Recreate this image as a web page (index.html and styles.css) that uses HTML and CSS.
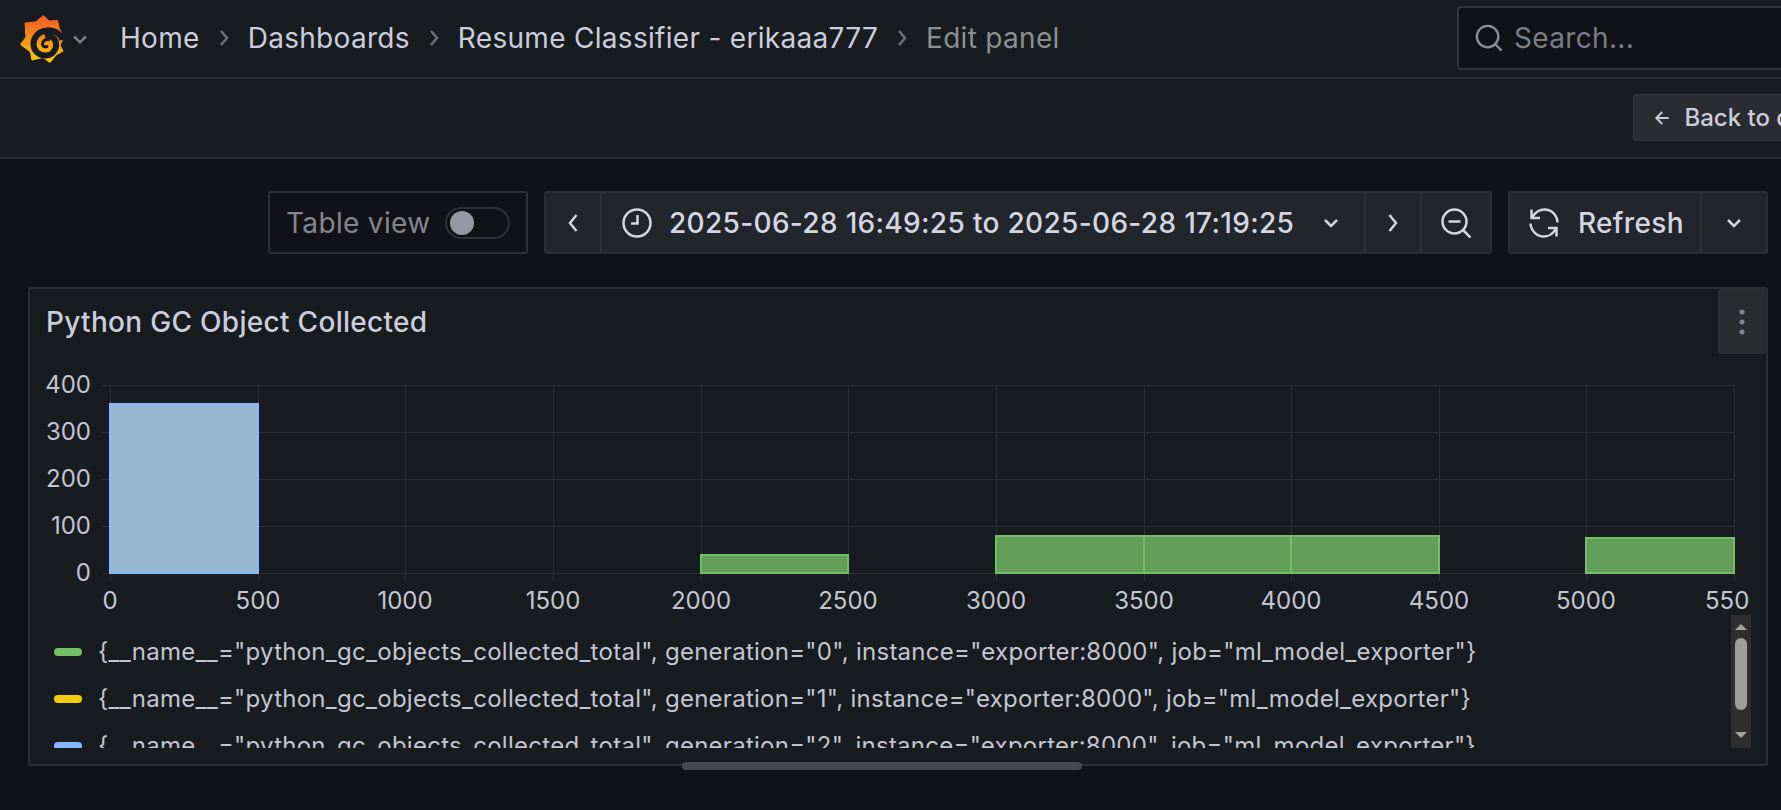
FILE: index.html
```html
<!DOCTYPE html>
<html lang="en">
<head>
<meta charset="utf-8">
<title>Edit panel - Grafana</title>
<link rel="stylesheet" href="styles.css">
</head>
<body>
<header class="nav">
  <svg class="logo" viewBox="18 12 48 52" aria-label="Grafana">
    <defs>
      <linearGradient id="sun" x1="0" y1="0" x2="0" y2="1">
        <stop offset="0" stop-color="#f05a28"/>
        <stop offset="1" stop-color="#fbca0a"/>
      </linearGradient>
    </defs>
    <path fill="url(#sun)" stroke="url(#sun)" stroke-width="1" stroke-linejoin="round" d="M43.5 14.5 L49 20 L57.5 19.5 L59 27 L62.5 34 L63 38 L60 44 L63 50 L56 54 L50 61.5 L43 56.5 L32 59 L30.5 51 L20.5 43.5 L26 36 L25 22 L35.5 21 Z"/>
    <path class="logo-dark" d="M62.500 39 C61 33 54 28.500 47 29.500 C39 30 33.500 36 33.500 43 C33.500 50 39 54.500 45.500 54.500 C52 54.500 57 49 56 42 C55 36 49 34 45 35.500"/>
    <path class="logo-core" d="M48.500 38.700 C45 38 42.500 40 42.500 43 C42.500 45 44.500 46.500 47 45.500"/>
  </svg>
  <svg class="caret" viewBox="0 0 24 24"><path d="M5 9l7 7 7-7"/></svg>
  <nav class="crumbs">
    <span class="crumb">Home</span>
    <svg class="sep" viewBox="0 0 10 20"><path d="M2 3l6 7-6 7"/></svg>
    <span class="crumb">Dashboards</span>
    <svg class="sep" viewBox="0 0 10 20"><path d="M2 3l6 7-6 7"/></svg>
    <span class="crumb">Resume Classifier - erikaaa777</span>
    <svg class="sep" viewBox="0 0 10 20"><path d="M2 3l6 7-6 7"/></svg>
    <span class="crumb crumb-current">Edit panel</span>
  </nav>
  <div class="search">
    <svg class="search-icon" viewBox="0 0 30 30"><circle cx="13.500" cy="13.500" r="11.500"/><path d="M22 22l6.500 6.500"/></svg>
    <span>Search...</span>
  </div>
</header>

<div class="subbar">
  <button class="back">
    <svg class="back-icon" viewBox="0 0 20 20"><path d="M17 10H3.500M10 3.500L3.500 10l6.500 6.500"/></svg>
    Back to dashboard
  </button>
</div>

<main class="content">
  <div class="toolbar">
    <label class="table-view">
      <span>Table view</span>
      <span class="switch"><span class="knob"></span></span>
    </label>
    <div class="group time-group">
      <button class="tb tb-prev"><svg class="chev-side" viewBox="0 0 12 20"><path d="M9.500 2L3 10l6.500 8"/></svg></button>
      <button class="tb tb-range">
        <svg class="tb-icon" viewBox="0 0 30 30"><circle cx="15" cy="15" r="13.500"/><path d="M15.500 7v8.500H9"/></svg>
        <span class="range-text">2025-06-28 16:49:25 to 2025-06-28 17:19:25</span>
        <svg class="chev-down" viewBox="0 0 16 10"><path d="M2 2l6 6 6-6"/></svg>
      </button>
      <button class="tb tb-next"><svg class="chev-side" viewBox="0 0 12 20"><path d="M2.500 2L9 10l-6.500 8"/></svg></button>
      <button class="tb tb-zoom">
        <svg class="tb-icon" viewBox="0 0 30 30"><circle cx="13.500" cy="13.500" r="12"/><path d="M7.500 13.500h12M22.500 22.500l7 7"/></svg>
      </button>
    </div>
    <div class="group refresh-group">
      <button class="tb tb-refresh">
        <svg class="tb-icon" viewBox="0 0 30 30"><path d="M2.500 1.500v8.500h8.500M3 9.500C6 4.500 10 1.500 15.500 1.500c7 0 12.500 5.500 13 13M27.500 28.500v-8.500H19M27 20.500c-3 5.500-6.500 8-12 8C8 28.500 2 23 1.500 15.500"/></svg>
        <span>Refresh</span>
      </button>
      <button class="tb tb-more"><svg class="chev-down" viewBox="0 0 16 10"><path d="M2 2l6 6 6-6"/></svg></button>
    </div>
  </div>

  <section class="panel">
    <div class="panel-head">
      <h2 class="panel-title">Python GC Object Collected</h2>
      <button class="panel-menu">
        <svg viewBox="0 0 6 26"><circle cx="3" cy="3" r="2.500"/><circle cx="3" cy="13" r="2.500"/><circle cx="3" cy="23" r="2.500"/></svg>
      </button>
    </div>
    <svg class="chart" viewBox="30 375 1736 240">
      <g class="grid">
        <path d="M102 385.500H1735M102 432.500H1735M102 479.500H1735M102 526.500H1735M102 573.500H1735"/>
        <path d="M110.500 385V581M258.500 385V581M405.500 385V581M553.500 385V581M701.500 385V581M848.500 385V581M996.500 385V581M1144.500 385V581M1291.500 385V581M1439.500 385V581M1586.500 385V581M1734.500 385V581"/>
      </g>
      <rect class="bar-blue" x="110" y="404" width="148" height="169"/>
      <g class="bar-green">
        <rect x="701" y="555" width="147" height="18"/>
        <rect x="996" y="536" width="148" height="37"/>
        <rect x="1144" y="536" width="147" height="37"/>
        <rect x="1291" y="536" width="148" height="37"/>
        <rect x="1586" y="538" width="148" height="35"/>
      </g>
      <g class="y-labels">
        <text x="91" y="393">400</text>
        <text x="91" y="440">300</text>
        <text x="91" y="487">200</text>
        <text x="91" y="534">100</text>
        <text x="91" y="581">0</text>
      </g>
      <g class="x-labels">
        <text x="110" y="609">0</text>
        <text x="258" y="609">500</text>
        <text x="405" y="609">1000</text>
        <text x="553" y="609">1500</text>
        <text x="701" y="609">2000</text>
        <text x="848" y="609">2500</text>
        <text x="996" y="609">3000</text>
        <text x="1144" y="609">3500</text>
        <text x="1291" y="609">4000</text>
        <text x="1439" y="609">4500</text>
        <text x="1586" y="609">5000</text>
        <text class="x-clipped" x="1705" y="609">550</text>
      </g>
    </svg>
    <div class="legend-wrap">
      <ul class="legend">
        <li class="legend-item"><i class="dash dash-green"></i>{__name__="python_gc_objects_collected_total", generation="0", instance="exporter:8000", job="ml_model_exporter"}</li>
        <li class="legend-item"><i class="dash dash-yellow"></i>{__name__="python_gc_objects_collected_total", generation="1", instance="exporter:8000", job="ml_model_exporter"}</li>
        <li class="legend-item"><i class="dash dash-blue"></i>{__name__="python_gc_objects_collected_total", generation="2", instance="exporter:8000", job="ml_model_exporter"}</li>
      </ul>
      <div class="vscroll">
        <i class="arrow-up"></i>
        <i class="vthumb"></i>
        <i class="arrow-down"></i>
      </div>
    </div>
  </section>
</main>
<div class="hthumb"></div>
</body>
</html>
```
FILE: styles.css
```css
* { box-sizing: border-box; }
html, body { margin: 0; height: 100%; }
body {
  width: 1781px;
  height: 810px;
  overflow: hidden;
  position: relative;
  background: #111217;
  color: #ccccdc;
  font-family: Inter, "Noto Sans", sans-serif;
}
button { font: inherit; color: inherit; background: none; border: 0; padding: 0; letter-spacing: inherit; }
svg { display: block; }

.nav {
  width: 1900px;
  height: 79px;
  display: flex;
  align-items: center;
  background: #181b1f;
  border-bottom: 2px solid #2c2e33;
}
.logo { width: 48px; height: 52px; margin-left: 18px; flex: none; }
.logo-dark { fill: none; stroke: #181b1f; stroke-width: 6; }
.logo-core { fill: none; stroke: #181b1f; stroke-width: 3; stroke-linecap: round; }
.caret { width: 20px; height: 20px; margin-left: 4px; flex: none; fill: none; stroke: #7e8089; stroke-width: 3; }
.crumbs { display: flex; align-items: center; margin-left: 30px; padding-bottom: 2px; font-size: 28px; letter-spacing: .3px; color: #ccccdc; white-space: nowrap; }
.sep { width: 10px; height: 20px; margin: 0 19px; fill: none; stroke: #6f7179; stroke-width: 2.500; }
.crumb-current { color: #8e8e96; }

.search {
  margin: 0 0 1px auto;
  width: 443px;
  height: 64px;
  display: flex;
  align-items: center;
  gap: 11px;
  padding-left: 16px;
  background: #111217;
  border: 2px solid #33353a;
  border-radius: 4px;
  color: #7b7d86;
  font-size: 28px;
  letter-spacing: .33px;
}
.search-icon { width: 28px; height: 28px; fill: none; stroke: #8e8e96; stroke-width: 2.500; }

.subbar {
  width: 1900px;
  height: 80px;
  display: flex;
  justify-content: flex-end;
  padding-top: 15px;
  background: #181b1f;
  border-bottom: 2px solid #2c2e33;
}
.back {
  width: 267px;
  height: 47px;
  display: flex;
  align-items: center;
  gap: 13px;
  padding-left: 19px;
  background: #2a2c32;
  border: 1px solid #33353a;
  border-radius: 3px;
  font-size: 24px;
  font-weight: 500;
  white-space: nowrap;
}
.back-icon { width: 20px; height: 20px; fill: none; stroke: #ccccdc; stroke-width: 2; }

.content { padding: 32px 0 0 28px; }
.toolbar { display: flex; height: 63px; padding-left: 240px; margin-bottom: 33px; }
.table-view {
  width: 260px;
  display: flex;
  align-items: center;
  gap: 15px;
  padding-left: 16px;
  border: 2px solid #2f3136;
  border-radius: 3px;
  color: #85858f;
  font-size: 28px;
  letter-spacing: .33px;
}
.switch {
  width: 65px;
  height: 32px;
  display: flex;
  align-items: center;
  padding-left: 3px;
  border: 2px solid #2f3136;
  border-radius: 16px;
}
.knob { width: 24px; height: 24px; border-radius: 50%; background: #9898a4; }

.group {
  display: flex;
  background: #22252b;
  border: 2px solid #2c2e33;
  border-radius: 3px;
  font-size: 28px;
  font-weight: 500;
  letter-spacing: .33px;
}
.time-group { margin-left: 16px; width: 948px; }
.refresh-group { margin-left: 16px; width: 260px; }
.tb { display: flex; align-items: center; justify-content: center; color: #d5d5e2; flex: none; }
.tb + .tb { border-left: 2px solid #2f3136; }
.tb-prev { width: 54px; }
.tb-range { width: 764px; gap: 17px; justify-content: flex-start; padding-left: 20px; }
.tb-next { width: 56px; }
.tb-zoom { width: 70px; }
.tb-refresh { width: 190px; gap: 19px; justify-content: flex-start; padding-left: 19px; }
.tb-more { width: 66px; }
.tb-icon { width: 30px; height: 30px; fill: none; stroke: #d5d5e2; stroke-width: 2.500; flex: none; }
.chev-side { width: 12px; height: 20px; fill: none; stroke: #d5d5e2; stroke-width: 2.500; }
.chev-down { width: 16px; height: 10px; fill: none; stroke: #d5d5e2; stroke-width: 2.500; }
.range-text { white-space: nowrap; }
.tb-range .chev-down { margin-left: 12px; }

.panel {
  width: 1740px;
  height: 479px;
  background: #181b1f;
  border: 2px solid #2c2e33;
  border-radius: 3px;
}
.panel-head { height: 86px; display: flex; justify-content: space-between; padding-left: 16px; }
.panel-title { margin: 17px 0 0; font-size: 28px; line-height: 32px; font-weight: 500; letter-spacing: .3px; }
.panel-menu {
  width: 48px;
  height: 65px;
  display: flex;
  align-items: center;
  justify-content: center;
  background: #2a2c30;
  border-radius: 3px;
}
.panel-menu svg { width: 6px; height: 26px; fill: #85858f; }

.chart { width: 1736px; height: 240px; }
.chart path { fill: none; }
.grid path { stroke: #2c2f34; stroke-width: 1; }
.bar-blue { fill: #97b6d2; stroke: #8ab8ff; stroke-width: 2; }
.bar-green rect { fill: #629e58; stroke: #73bf69; stroke-width: 2; }
.y-labels text, .x-labels text { fill: #c4c4d2; font-size: 24px; font-family: Inter, sans-serif; }
.y-labels text { text-anchor: end; }
.x-labels text { text-anchor: middle; }
.x-labels .x-clipped { text-anchor: start; }

.legend-wrap { display: flex; height: 133px; padding-right: 15px; }
.legend { flex: 1; min-width: 0; margin: 0; padding: 13px 0 0 24px; list-style: none; overflow: hidden; }
.legend-item {
  display: flex;
  align-items: center;
  height: 47px;
  gap: 16px;
  font-size: 24px;
  letter-spacing: .27px;
  color: #c4c4d2;
  white-space: nowrap;
}
.dash { width: 28px; height: 8px; border-radius: 4px; flex: none; }
.dash-green { background: #73bf69; }
.dash-yellow { background: #f2cc0c; }
.dash-blue { background: #8ab8ff; }

.vscroll {
  width: 20px;
  flex: none;
  display: flex;
  flex-direction: column;
  align-items: center;
  background: #2e2e2e;
}
.vthumb { width: 12px; height: 72px; margin-top: 8px; border-radius: 6px; background: #9e9e9e; }
.arrow-up, .arrow-down { width: 0; height: 0; border-left: 6px solid transparent; border-right: 6px solid transparent; }
.arrow-up { margin-top: 9px; border-bottom: 6px solid #a3a3a3; }
.arrow-down { margin-top: 22px; border-top: 6px solid #a3a3a3; }

.hthumb {
  position: absolute;
  left: 682px;
  top: 762px;
  width: 400px;
  height: 8px;
  border-radius: 4px;
  background: #47494e;
}
```
